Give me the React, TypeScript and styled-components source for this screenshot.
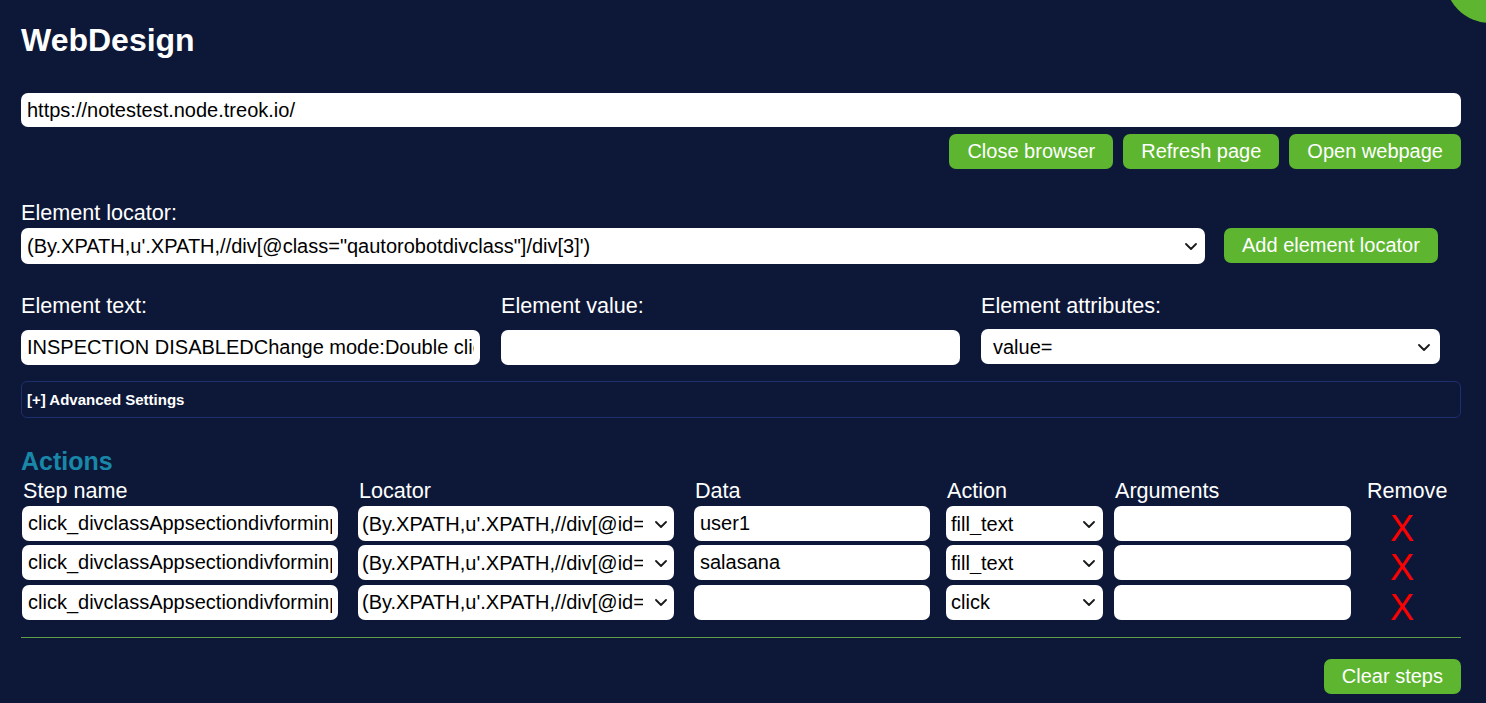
import React from 'react';
import styled, { createGlobalStyle } from 'styled-components';

const GlobalStyle = createGlobalStyle`
  html, body { margin: 0; padding: 0; background: #0d1838; overflow: hidden; }
  body { font-family: "Liberation Sans", Arial, sans-serif; color: #fff; }
  * { box-sizing: border-box; }
`;

const GREEN = '#5db530';

const Page = styled.div`
  position: relative;
  min-height: 703px;
  padding: 22px 25px 10px 21px;
`;

const Blob = styled.div`
  position: absolute;
  top: -67px;
  right: -49px;
  width: 90px;
  height: 90px;
  border-radius: 50%;
  background: ${GREEN};
`;

const Title = styled.h1`
  margin: 0;
  font-size: 32px;
  line-height: 37px;
  font-weight: 700;
  color: #fff;
`;

const fieldBase = `
  border: none;
  outline: none;
  background: #fff;
  color: #000;
  font-family: "Liberation Sans", Arial, sans-serif;
  font-size: 20px;
  border-radius: 7px;
`;

const TextInput = styled.input<{ $w?: string; $h?: number }>`
  ${fieldBase}
  display: block;
  width: ${(p) => p.$w ?? '100%'};
  height: ${(p) => p.$h ?? 35}px;
  padding: 0 6px;
`;

const SelectWrap = styled.div<{ $w?: string }>`
  position: relative;
  width: ${(p) => p.$w ?? '100%'};
`;

const NativeSelect = styled.select<{ $h?: number; $pad?: number; $padR?: number }>`
  ${fieldBase}
  appearance: none;
  -webkit-appearance: none;
  display: block;
  width: 100%;
  height: ${(p) => p.$h ?? 35}px;
  padding: 0 ${(p) => p.$padR ?? 24}px 0 ${(p) => p.$pad ?? 4}px;
`;

const Chevron = styled.svg<{ $right?: number }>`
  position: absolute;
  top: 50%;
  right: ${(p) => p.$right ?? 8}px;
  width: 12px;
  height: 7px;
  margin-top: -3px;
  pointer-events: none;
`;

type SelectProps = {
  w?: string;
  h?: number;
  pad?: number;
  padRight?: number;
  arrowRight?: number;
  value: string;
};

function Select({ w, h, pad, padRight, arrowRight, value }: SelectProps) {
  return (
    <SelectWrap $w={w}>
      <NativeSelect $h={h} $pad={pad} $padR={padRight} defaultValue={value}>
        <option value={value}>{value}</option>
      </NativeSelect>
      <Chevron $right={arrowRight} viewBox="0 0 12 7">
        <path d="M1 1l5 5 5-5" fill="none" stroke="#1a1a1a" strokeWidth="1.8" strokeLinecap="round" strokeLinejoin="round" />
      </Chevron>
    </SelectWrap>
  );
}

const UrlInput = styled(TextInput)`
  margin-top: 34px;
`;

const ButtonRow = styled.div`
  display: flex;
  justify-content: flex-end;
  gap: 10px;
  margin-top: 7px;
`;

const GreenButton = styled.button`
  height: 35px;
  padding: 0 18px;
  border: none;
  border-radius: 7px;
  background: ${GREEN};
  color: #fff;
  font-family: "Liberation Sans", Arial, sans-serif;
  font-size: 20px;
  white-space: nowrap;
`;

const FieldLabel = styled.div<{ $mb?: number }>`
  font-size: 21.6px;
  line-height: 25px;
  color: #fff;
  margin-bottom: ${(p) => p.$mb ?? 3}px;
`;

const LocatorSection = styled.div`
  margin-top: 31px;
`;

const LocatorRow = styled.div`
  display: flex;
  align-items: flex-start;
  gap: 19px;
`;

const FieldGrid = styled.div`
  display: grid;
  grid-template-columns: repeat(3, 1fr);
  margin-top: 29px;
`;

const FieldCell = styled.div`
  padding-right: 21px;
`;

const Advanced = styled.div`
  margin-top: 16px;
  height: 37px;
  border: 1px solid #1d2f6c;
  border-radius: 6px;
  padding: 0 5px;
  display: flex;
  align-items: center;
  font-size: 15px;
  font-weight: 700;
  color: #fff;
`;

const ActionsTitle = styled.h2`
  margin: 29px 0 0 0;
  font-size: 25px;
  line-height: 29px;
  font-weight: 700;
  color: #1887a8;
`;

const StepsGrid = styled.div`
  display: grid;
  grid-template-columns: 336px 336px 252px 168px 252px 96px;
  row-gap: 4.4px;
  margin-top: 1.5px;
`;

const HeadCell = styled.div`
  font-size: 21.6px;
  line-height: 25px;
  padding-left: 2px;
  margin-bottom: -0.9px;
  color: #fff;
`;

const Cell = styled.div`
  padding-left: 1px;
`;

const RemoveX = styled.div`
  height: 35px;
  font-size: 36px;
  line-height: 45px;
  color: #ff0000;
  padding-left: 25px;
  cursor: pointer;
`;

const Divider = styled.hr`
  margin: 17px 0 0 0;
  border: none;
  height: 1px;
  background: #5f9f45;
`;

const FooterRow = styled.div`
  display: flex;
  justify-content: flex-end;
  margin-top: 21px;
`;

const steps = [
  { data: 'user1', action: 'fill_text' },
  { data: 'salasana', action: 'fill_text' },
  { data: '', action: 'click' },
];

const stepName = 'click_divclassAppsectiondivforminputtypetextplaceholderUsername';
const stepLocator = "(By.XPATH,u'.XPATH,//div[@id=\"app\"]/section/div/form/input[1]')";

export default function App() {
  return (
    <Page>
      <GlobalStyle />
      <Blob />
      <Title>WebDesign</Title>
      <UrlInput $h={34} defaultValue="https://notestest.node.treok.io/" />
      <ButtonRow>
        <GreenButton>Close browser</GreenButton>
        <GreenButton>Refresh page</GreenButton>
        <GreenButton>Open webpage</GreenButton>
      </ButtonRow>

      <LocatorSection>
        <FieldLabel>Element locator:</FieldLabel>
        <LocatorRow>
          <Select
            w="1184px"
            h={36}
            pad={6}
            arrowRight={8}
            value={'(By.XPATH,u\'.XPATH,//div[@class="qautorobotdivclass"]/div[3]\')'}
          />
          <GreenButton>Add element locator</GreenButton>
        </LocatorRow>
      </LocatorSection>

      <FieldGrid>
        <FieldCell>
          <FieldLabel $mb={12}>Element text:</FieldLabel>
          <TextInput defaultValue="INSPECTION DISABLEDChange mode:Double click" />
        </FieldCell>
        <FieldCell>
          <FieldLabel $mb={12}>Element value:</FieldLabel>
          <TextInput defaultValue="" />
        </FieldCell>
        <FieldCell>
          <FieldLabel $mb={11}>Element attributes:</FieldLabel>
          <Select pad={12} arrowRight={10} value="value=" />
        </FieldCell>
      </FieldGrid>

      <Advanced>[+] Advanced Settings</Advanced>

      <ActionsTitle>Actions</ActionsTitle>
      <StepsGrid>
        <HeadCell>Step name</HeadCell>
        <HeadCell>Locator</HeadCell>
        <HeadCell>Data</HeadCell>
        <HeadCell>Action</HeadCell>
        <HeadCell>Arguments</HeadCell>
        <HeadCell>Remove</HeadCell>
        {steps.map((s, i) => (
          <React.Fragment key={i}>
            <Cell>
              <TextInput $w="316px" defaultValue={stepName} />
            </Cell>
            <Cell>
              <Select w="316px" pad={4} padRight={31} arrowRight={7} value={stepLocator} />
            </Cell>
            <Cell>
              <TextInput $w="236px" defaultValue={s.data} />
            </Cell>
            <Cell>
              <Select w="157px" pad={5} arrowRight={8} value={s.action} />
            </Cell>
            <Cell>
              <TextInput $w="237px" defaultValue="" />
            </Cell>
            <RemoveX>X</RemoveX>
          </React.Fragment>
        ))}
      </StepsGrid>

      <Divider />
      <FooterRow>
        <GreenButton>Clear steps</GreenButton>
      </FooterRow>
    </Page>
  );
}
